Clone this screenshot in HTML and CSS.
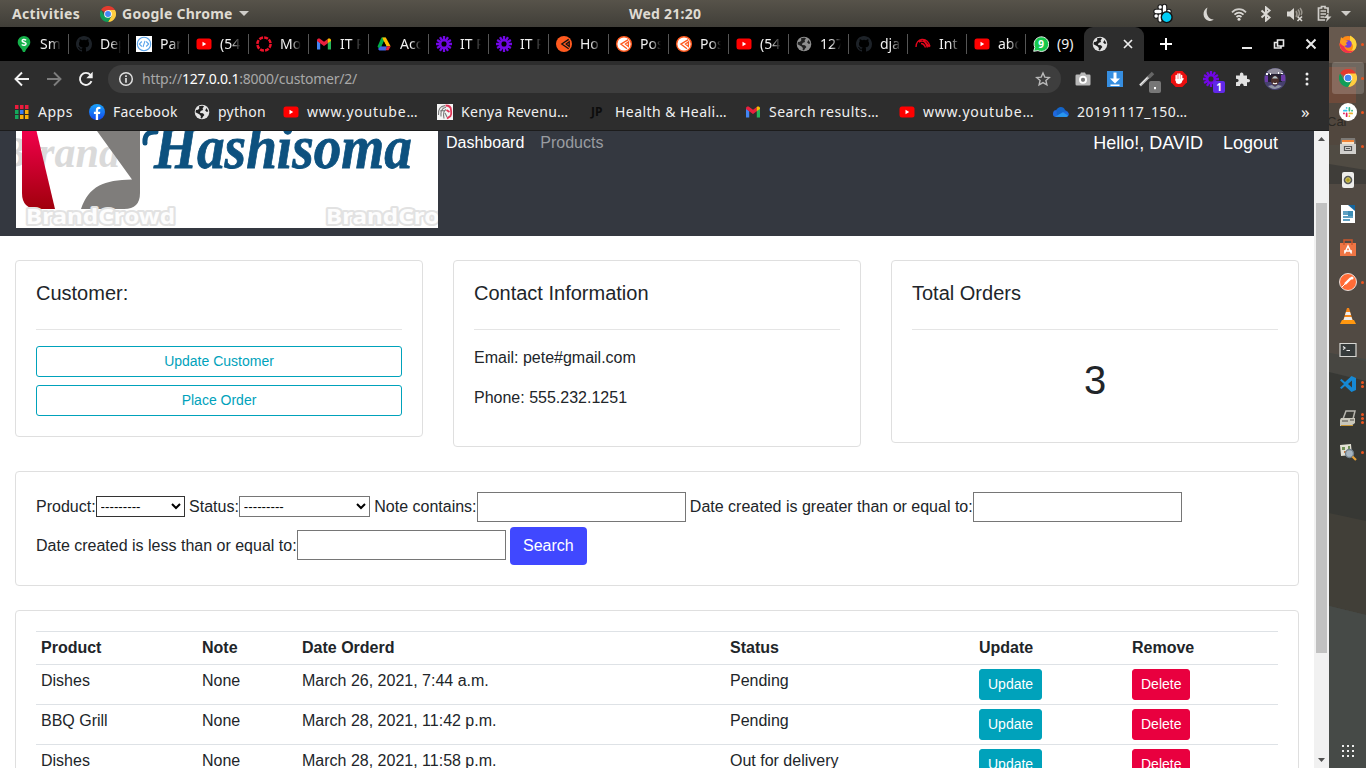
FILE: index.html
```html
<!DOCTYPE html>
<html lang="en">
<head>
<meta charset="utf-8">
<title>Customer</title>
<link rel="stylesheet" href="styles.css">
</head>
<body>
<svg class="defs" aria-hidden="true">
  <defs>
    <linearGradient id="fbg" x1="0" y1="0" x2="0" y2="1"><stop offset="0" stop-color="#19a4fb"/><stop offset="1" stop-color="#1348ee"/></linearGradient>
    <linearGradient id="redbar" x1="0" y1="0" x2="0" y2="1"><stop offset="0" stop-color="#f0004a"/><stop offset="1" stop-color="#a0000c"/></linearGradient>
    <symbol id="youtube" viewBox="0 0 16 16"><rect x=".5" y="2.5" width="15" height="11" rx="2.5" fill="#f00"/><path d="M6.5 5.8v4.4L10.2 8z" fill="#fff"/></symbol>
    <symbol id="github" viewBox="0 0 16 16"><path fill="#1d2228" d="M8 0C3.58 0 0 3.58 0 8c0 3.54 2.29 6.53 5.47 7.59.4.07.55-.17.55-.38v-1.49c-2.01.37-2.53-.49-2.69-.94-.09-.23-.48-.94-.82-1.13-.28-.15-.68-.52-.01-.53.63-.01 1.08.58 1.23.82.72 1.21 1.87.87 2.33.66.07-.52.28-.87.51-1.07-1.78-.2-3.64-.89-3.64-3.95 0-.87.31-1.59.82-2.15-.08-.2-.36-1.02.08-2.12 0 0 .67-.21 2.2.82a7.7 7.7 0 0 1 4 0c1.53-1.04 2.2-.82 2.2-.82.44 1.1.16 1.92.08 2.12.51.56.82 1.27.82 2.15 0 3.07-1.87 3.75-3.65 3.95.29.25.54.73.54 1.48v2.2c0 .21.15.46.55.38A8 8 0 0 0 16 8c0-4.42-3.58-8-8-8z"/></symbol>
    <symbol id="gmail" viewBox="0 0 16 16"><path fill="#4285f4" d="M1 4.5v9h3.200V7z"/><path fill="#24b55a" d="M15 4.500v9h-3.200V7z"/><path fill="#ea1f3d" d="M1 4.500C1 2.500 3 2 4.300 3L8 5.800 11.800 3v4.200L8 10 1 5z"/><path fill="#fbbc04" d="M11.700 3C13 2 15 2.500 15 4.500v.4l-3.300 2.400z"/></symbol>
    <symbol id="drive" viewBox="0 0 16 16"><path fill="#00ac47" d="M5.500 1.600h4L4 14l-2.500-3.500z"/><path fill="#ffba00" d="M6.200 1.600h3.600l4.800 8.600h-4.400z"/><path fill="#4164e8" d="M4.800 10.200h6.400L9.800 14.400H3.400L2 13z"/><path fill="#ea1f3d" d="M11 10.200h3.700l-2.200 4h-3z"/><path fill="#000" d="M8 5.800l2.500 4.400h-5z"/></symbol>
    <symbol id="burst" viewBox="0 0 16 16"><g stroke="#7106e6" stroke-width="2.300"><path d="M8 0v5.500M8 10.500v5.500M0 8h5.500M10.500 8h5.500M4 1.100l2.700 4.600M9.300 10.300l2.700 4.600M1.100 4l4.600 2.700M10.300 9.300l4.600 2.700M1.100 12l4.600-2.700M10.300 6.700l4.600-2.700M4 14.900l2.700-4.600M9.300 5.700L12 1.100"/></g></symbol>
    <symbol id="fish" viewBox="0 0 16 16"><circle cx="8" cy="8" r="8" fill="#ff5a1f"/><path fill="none" stroke="#111" stroke-width="1.300" d="M12.700 3.400L5.800 8l6.900 4.800M13.200 5.800L10.200 8l3 2.400z"/></symbol>
    <symbol id="fish2" viewBox="0 0 16 16"><circle cx="8" cy="8" r="7.300" fill="#fff" stroke="#ff5a1f" stroke-width="1.400"/><path fill="none" stroke="#ff5a1f" stroke-width="1.300" d="M12.300 3.600L4.800 8.100l6.200 4.600M12.600 5.800L9.400 8l3 2.400z"/></symbol>
    <symbol id="globe" viewBox="0 0 16 16"><circle cx="8" cy="8" r="7.300" fill="currentColor"/><path fill="#202020" d="M5 2.200c3-1 4.500-.5 5 .2L8.600 4.200 9 6 6.600 7 6 9l3 .2 1.400 1.700-1.500 1.800L8 14.400l-1.400-.3.300-2.100-1.600-1.800L1.500 8.200 2 6l2-.3 1.300-1.300zM12.500 4l1.800 3.200-1.400.8-1.800-1.400z"/></symbol>
    <symbol id="slack" viewBox="0 0 16 16"><g stroke-width="2.500" stroke-linecap="round"><path stroke="#36c5f0" d="M2 6h4M6 2v.2"/><path stroke="#2eb67d" d="M10 2v4M14 6h-.2"/><path stroke="#ecb22e" d="M10 10h4M10 14v-.2"/><path stroke="#e01e5a" d="M6 10v4M2 10h.2"/></g></symbol>
    <symbol id="chrome" viewBox="0 0 20 20"><path fill="#e33b2e" d="M10 10L1.300 5A10 10 0 0 1 18.700 5z"/><path fill="#ffcd40" d="M10 10V5h8.700A10 10 0 0 1 10 20l4.300-7.500z"/><path fill="#109d58" d="M10 10l4.300 2.500L10 20A10 10 0 0 1 1.300 5l4.400 7.500z"/><circle cx="10" cy="10" r="4.800" fill="#fff"/><circle cx="10" cy="10" r="3.700" fill="#4587f3"/></symbol>
  </defs>
</svg>

<header class="topbar">
  <span class="activities">Activities</span>
  <svg class="i16" viewBox="0 0 20 20"><use href="#chrome"/></svg>
  <span class="appname">Google Chrome</span>
  <svg class="caret" width="10" height="6" viewBox="0 0 10 6"><path d="M0 0h10L5 5z" fill="#cfcdc9"/></svg>
  <span class="clock">Wed 21:20</span>
  <div class="tray">
    <svg width="22" height="22" viewBox="0 0 22 22"><g stroke="#1b1b1b" stroke-width="5.500" stroke-linecap="round"><path d="M4 8.500h4M8.200 4v.2M12.500 3.500v5M17 8.500h-.3M4 13h.3M8.200 13v4"/></g><g stroke="#fff" stroke-width="3.300" stroke-linecap="round"><path d="M4 8.500h4M8.200 4v.2M12.500 3.500v5M17 8.500h-.3M4 13h.3M8.200 13v4"/></g><circle cx="14.700" cy="14.200" r="5.400" fill="#00cdf5" stroke="#111" stroke-width="1.400"/></svg>
    <svg class="moon" width="16" height="16" viewBox="0 0 16 16"><path fill="#dad8d4" d="M6.500 1.500C1 4 1.200 13 7.500 14.800c2 .5 4 0 5.300-1.200C7 13.500 4.200 7 6.500 1.500z"/></svg>
    <svg class="wifi" width="16" height="16" viewBox="0 0 16 16"><g fill="none" stroke="#cfcdc9" stroke-width="1.700"><path d="M1 6.300C5 2 11 2 15 6.300"/><path d="M3.500 8.700c2.800-2.700 6.200-2.700 9 0" stroke="#dedcd8"/><path d="M5.500 11c1.700-1.500 3.300-1.500 5 0" stroke="#dedcd8"/></g><circle cx="8" cy="13.300" r="1.500" fill="#dedcd8"/></svg>
    <svg class="bt" width="12" height="16" viewBox="0 0 12 16"><path fill="none" stroke="#dad8d4" stroke-width="2" d="M1.500 4.500l8 7L6 14.500V1.500L9.500 4.500l-8 7"/></svg>
    <svg class="vol" width="18" height="16" viewBox="0 0 18 16"><path fill="#dad8d4" d="M1 5.500h3L8 2v12L4 10.500H1z"/><path fill="none" stroke="#99958d" stroke-width="1.500" d="M10 5q2 3 0 6M12 3.500q3 4 0 7M14 2q3 4 1 7"/><path stroke="#dad8d4" stroke-width="1.600" d="M11.500 10.500l4.500 4.500M16 10.500L11.500 15"/></svg>
    <svg class="bat" width="15" height="17" viewBox="0 0 15 17"><path fill="none" stroke="#cfcdc9" stroke-width="1.700" d="M11 8V3H8V1.500H4.500V3H1.500v12H8"/><path stroke="#cfcdc9" stroke-width="1.500" d="M3.500 6h5.500M3.500 9h5.500M3.500 12h4"/><path fill="#cfcdc9" d="M11.500 8l-4.500 5h3l-1 4 5.500-5.500h-3z"/></svg>
    <svg width="10" height="6" viewBox="0 0 10 6"><path d="M0 0h10L5 5z" fill="#cfcdc9"/></svg>
  </div>
</header>

<div class="workspace">
<div class="browser">
  <div class="tabs">
    <div class="tab"><svg class="i16" viewBox="0 0 16 16"><path fill="#14b04a" d="M8 0a6.300 6.300 0 0 1 6.300 6.300C14.300 10 10.500 11.500 9 16H7C5.500 11.500 1.700 10 1.700 6.300A6.300 6.300 0 0 1 8 0z"/><path fill="none" stroke="#fff" stroke-width="1.400" d="M10.200 4.200C8.500 3 6 3.300 6.100 4.900c.1 1.700 4 1 4 2.900 0 1.700-2.700 1.900-4.400.7"/></svg><span>Sm</span></div>
    <div class="tab"><svg class="i16"><use href="#github"/></svg><span>Dep</span></div>
    <div class="tab"><svg class="i16" viewBox="0 0 16 16"><path fill="#fff" d="M0 0h16v16H0z"/><g fill="none" stroke="#5aa3ea" stroke-width="1.100"><circle cx="8" cy="8" r="6.700"/><path d="M5.800 5.500L3.300 8l2.500 2.500M10.200 5.500L12.700 8l-2.500 2.500M9 4.800L7 11.200"/></g></svg><span>Par</span></div>
    <div class="tab"><svg class="i16"><use href="#youtube"/></svg><span>(54</span></div>
    <div class="tab"><svg class="i16" viewBox="0 0 16 16"><circle cx="8" cy="8" r="6.600" fill="none" stroke="#ee1129" stroke-width="2.500" stroke-dasharray="4 1.180"/></svg><span>Mo</span></div>
    <div class="tab"><svg class="i16"><use href="#gmail"/></svg><span>IT P</span></div>
    <div class="tab"><svg class="i16"><use href="#drive"/></svg><span>Acc</span></div>
    <div class="tab"><svg class="i16"><use href="#burst"/></svg><span>IT P</span></div>
    <div class="tab"><svg class="i16"><use href="#burst"/></svg><span>IT P</span></div>
    <div class="tab"><svg class="i16"><use href="#fish"/></svg><span>Ho</span></div>
    <div class="tab"><svg class="i16"><use href="#fish2"/></svg><span>Pos</span></div>
    <div class="tab"><svg class="i16"><use href="#fish2"/></svg><span>Pos</span></div>
    <div class="tab"><svg class="i16"><use href="#youtube"/></svg><span>(54</span></div>
    <div class="tab"><svg class="i16 dim"><use href="#globe"/></svg><span>127</span></div>
    <div class="tab narrow"><svg class="i16"><use href="#github"/></svg><span>dja</span></div>
    <div class="tab narrow"><svg class="i16" viewBox="0 0 16 16"><g fill="none" stroke="#e5071c" stroke-width="1.400"><path d="M1 11C1 2 12 0 15 10.500M4 6c5-2.500 7 .5 8.500 5.500M6 7.500c2.500 0 3.500 1.500 4.500 4M8.500 4l6 7"/></g></svg><span>Int</span></div>
    <div class="tab narrow"><svg class="i16"><use href="#youtube"/></svg><span>abo</span></div>
    <div class="tab last"><svg class="i16" viewBox="0 0 16 16"><path fill="#16c74c" stroke="#fff" stroke-width=".9" d="M.7 15.300l1.100-4A7.300 7.300 0 1 1 5 14.600z"/><text x="8.200" y="11.700" text-anchor="middle" class="badge9">9</text></svg><span>(9)</span></div>
    <div class="tab active"><svg class="i16 light"><use href="#globe"/></svg><svg width="10" height="10" viewBox="0 0 10 10"><path stroke="#eee" stroke-width="1.700" d="M1 1l8 8M9 1L1 9"/></svg></div>
    <svg class="plus" width="12" height="12" viewBox="0 0 12 12"><path stroke="#fff" stroke-width="2" d="M6 0v12M0 6h12"/></svg>
    <div class="winctl">
      <svg width="12" height="12" viewBox="0 0 12 12"><path stroke="#e8e8e8" stroke-width="2" d="M1 10h10"/></svg>
      <svg width="12" height="12" viewBox="0 0 12 12"><path fill="none" stroke="#e8e8e8" stroke-width="1.600" d="M4.500 2h6v6h-6zM4 4.500H1.500V10H8V8.500"/></svg>
      <svg width="12" height="12" viewBox="0 0 12 12"><path stroke="#e8e8e8" stroke-width="2" d="M1.500 1.500l9 9M10.500 1.500l-9 9"/></svg>
    </div>
  </div>

  <div class="toolbar">
    <div class="navbtns">
      <svg width="16" height="16" viewBox="0 0 16 16"><path fill="none" stroke="#f1f1f1" stroke-width="1.900" d="M15 8H2M8 1.500L1.500 8 8 14.500"/></svg>
      <svg width="16" height="16" viewBox="0 0 16 16"><path fill="none" stroke="#7d7d7d" stroke-width="1.900" d="M1 8h13M8 1.500L14.500 8 8 14.500"/></svg>
      <svg width="16" height="16" viewBox="0 0 16 16"><path fill="none" stroke="#f1f1f1" stroke-width="1.900" d="M13.500 10.200A6 6 0 1 1 12.500 4"/><path fill="#f1f1f1" d="M14.700.8v6.400H8.300z"/></svg>
    </div>
    <div class="omnibox">
      <svg width="16" height="16" viewBox="0 0 16 16"><circle cx="8" cy="8" r="6.300" fill="none" stroke="#e0e0e0" stroke-width="1.500"/><path stroke="#e0e0e0" stroke-width="1.700" d="M8 7v4.700M8 4.200v1.700"/></svg>
      <span class="url">http://<b>127.0.0.1</b>:8000/customer/2/</span>
      <svg class="star" width="16" height="16" viewBox="0 0 16 16"><path fill="none" stroke="#b9b9b9" stroke-width="1.400" d="M8 2l1.800 4.100 4.500.4-3.400 3 1 4.400L8 11.600l-3.900 2.300 1-4.400-3.400-3 4.500-.4z"/></svg>
    </div>
    <div class="exts">
      <svg class="i16" viewBox="0 0 16 16"><path fill="#b9b9b9" d="M1.800 3.500H5l1-2h4l1 2h3.200q1.300 0 1.300 1.300v8.400q0 1.300-1.300 1.300H1.800Q.5 14.500.5 13.200V4.800q0-1.300 1.300-1.300z"/><circle cx="8" cy="8.700" r="3" fill="none" stroke="#fff" stroke-width="2"/><circle cx="8" cy="8.700" r="2" fill="#777"/></svg>
      <svg class="i16" viewBox="0 0 16 16"><path fill="#368ee0" d="M0 0h16v16H0z"/><path fill="#fff" d="M6.500 1.500h3v6H13l-5 5-5-5h3.500zM3.500 13.500h9V15h-9z"/></svg>
      <div class="ext"><svg class="i16" viewBox="0 0 16 16"><path stroke="#bbb" stroke-width="2.600" d="M1 14.500L9.500 6"/><path stroke="#666" stroke-width="3.500" d="M9.500 6.500L14 2"/><path stroke="#eee" d="M1 14L8 7"/></svg><i class="chip grey"></i></div>
      <svg class="i16" viewBox="0 0 16 16"><path fill="#eb0f0f" d="M4.700 0h6.600L16 4.700v6.600L11.300 16H4.700L0 11.300V4.700z"/><path fill="none" stroke="#fff" stroke-width="1.500" stroke-linecap="round" d="M5.200 4.500v5M7 3v5M8.800 3v5M10.600 4.500v5l1.400-1.700"/><path fill="#fff" d="M4.500 8h6.700v2c0 3-5 4-6.200 1.500z"/></svg>
      <div class="ext"><svg class="i16"><use href="#burst"/></svg><i class="chip violet">1</i></div>
      <svg class="i16" viewBox="0 0 16 16"><path fill="#e2e2e2" d="M1 4.500h4C4 .5 9 .5 8.500 4.500H12V8c4-.8 4 4 0 3.300V15H8.700c.2-3.500-4-3.500-3.700 0H1v-3.800c3.500 0 3.500-3.500 0-3.500z"/></svg>
      <svg class="avatar" width="22" height="22" viewBox="0 0 22 22"><circle cx="11" cy="11" r="11" fill="#46406e"/><path fill="#8f8c9c" d="M3 3.500C8-1 15-1 19 3.500l-2 2.500H5z"/><path fill="#232033" d="M4 6h14v8H4z"/><path fill="#6d3ba8" d="M1 8h3v6H1zM17 7h4v6h-4z"/><path fill="#fff" d="M2 5h2v2H2zM6 5h1v2H6zM14 4h1v2h-1zM17 5h2v1h-2z"/><ellipse cx="11" cy="12.500" rx="4" ry="5" fill="#4b302d"/><path fill="#b3c5ca" d="M8 10.500q3-5 6 0z"/><path stroke="#fff" stroke-width="1.200" d="M9 15q2 1.500 4 0"/><path fill="#8f93a3" d="M4 18l4-1 3 2 3-2 4 1q-7 6-14 0z"/></svg>
      <svg width="16" height="16" viewBox="0 0 16 16" fill="#eee"><circle cx="8" cy="3" r="1.500"/><circle cx="8" cy="8" r="1.500"/><circle cx="8" cy="13" r="1.500"/></svg>
    </div>
  </div>

  <div class="bookmarks">
    <div class="bm"><svg class="apps" width="14" height="14" viewBox="0 0 14 14"><path fill="#ea1c3d" d="M0 0h3.500v4H0zM5 0h3.500v4H5zM10 0h3.500v4H10z"/><path fill="#14a85c" d="M0 5h3.500v4H0zM0 10h3.500v4H0z"/><path fill="#3a7df0" d="M5 5h3.500v4H5z"/><path fill="#f9b20a" d="M10 5h3.500v4H10zM5 10h3.500v4H5zM10 10h3.500v4H10z"/></svg><span class="w-apps">Apps</span></div>
    <div class="bm"><svg class="i16" viewBox="0 0 16 16"><circle cx="8" cy="8" r="8" fill="url(#fbg)"/><path fill="#fff" d="M6.800 15.900V10H4.900V7.700h1.900V6.200c0-2.200 1.200-3.400 3.100-3.400l1.500.1v2h-1c-1 0-1.300.6-1.300 1.300v1.500h2.200L11 10H9.100v5.900z"/></svg><span class="w-fb">Facebook</span></div>
    <div class="bm"><svg class="i16 light"><use href="#globe"/></svg><span class="w-py">python</span></div>
    <div class="bm"><svg class="i16"><use href="#youtube"/></svg><span class="w-yt">www.youtube…</span></div>
    <div class="bm"><svg class="i16" viewBox="0 0 16 16"><path fill="#f4f4f4" d="M0 0h16v16H0z"/><path fill="none" stroke="#777" stroke-width="1.100" d="M8 1.500C3 2 1 6 1.500 11M8 3.500C5 4.500 3.500 8 4 12.500M9 5.500C6 7 6 10 7 14.500M5 2.500l4 1M3 7l5-.5M8 9l2 4"/><path fill="none" stroke="#df3657" stroke-width="1.800" d="M8.500 1.500c3 0 5.500 1.500 5.500 4.500 0 2 1 4-.5 6L10 14.500M9.500 6l3 2"/></svg><span class="w-ke">Kenya Revenu…</span></div>
    <div class="bm"><i class="jp">JP</i><span class="w-he">Health &amp; Heali…</span></div>
    <div class="bm"><svg class="i16"><use href="#gmail"/></svg><span class="w-se">Search results…</span></div>
    <div class="bm"><svg class="i16"><use href="#youtube"/></svg><span class="w-yt">www.youtube…</span></div>
    <div class="bm"><svg class="i16" viewBox="0 0 16 16"><path fill="#1464c8" d="M3 6.500C5 1.500 11 2 12 6l3 2-4 5H3z"/><path fill="#2068dd" d="M3.500 6C0 6 0 9 0 10.500 0 12 1 13 3 13h10c3.500 0 4-5 0-5.500-3 0-5 1-9 5z"/><path fill="#2897ee" d="M2 12.800l8-4.600 5 3.300q-.7 1.500-2.200 1.500z"/></svg><span class="w-20">20191117_150…</span></div>
    <span class="more">»</span>
  </div>

  <div class="viewport">
    <main class="page">
      <nav class="navbar">
        <svg class="logo" width="422" height="97" viewBox="0 0 422 97">
          <path fill="#fff" d="M0 0h422v97H0z"/>
          <text x="-19" y="36" class="ghost">B</text><text x="22" y="36" class="ghost" textLength="82" lengthAdjust="spacingAndGlyphs">rand</text>
          <path fill="url(#redbar)" d="M6 0h14.500L39 78H22Q6 78 6 62z"/>
          <path fill="#7f7d7b" d="M81 0h43v62q0 16-16 16H65C73 55 88 49 116 48.500z"/>
          <text x="10" y="93" class="mark" textLength="149" lengthAdjust="spacingAndGlyphs">BrandCrowd</text>
          <text x="310" y="93" class="mark" textLength="149" lengthAdjust="spacingAndGlyphs">BrandCrowd</text>
          <path fill="none" stroke="#0d517f" stroke-width="5" stroke-linecap="round" d="M140 1q-12-1-11 11"/>
          <text x="138" y="37" class="brand" textLength="258" lengthAdjust="spacingAndGlyphs">Hashisoma</text>
        </svg>
        <a class="link on">Dashboard</a><a class="link">Products</a>
        <span class="hello">Hello!, DAVID</span><a class="logout">Logout</a>
      </nav>

      <section class="cards">
        <div class="card"><h5>Customer:</h5><hr><a class="btn outline">Update Customer</a><a class="btn outline">Place Order</a></div>
        <div class="card"><h5>Contact Information</h5><hr><p>Email: pete#gmail.com</p><p>Phone: 555.232.1251</p></div>
        <div class="card"><h5>Total Orders</h5><hr><h1>3</h1></div>
      </section>

      <form class="card filter">
        <div class="frow">
          <label>Product:</label><select class="s1"><option>---------</option></select>
          <label>Status:</label><select class="s2"><option>---------</option></select>
          <label>Note contains:</label><input type="text">
          <label>Date created is greater than or equal to:</label><input type="text">
        </div>
        <div class="frow second">
          <label>Date created is less than or equal to:</label><input type="text">
          <button type="button" class="search">Search</button>
        </div>
      </form>

      <div class="card orders">
        <table>
          <colgroup><col class="c1"><col class="c2"><col class="c3"><col class="c4"><col class="c5"><col class="c6"></colgroup>
          <tr><th>Product</th><th>Note</th><th>Date Orderd</th><th>Status</th><th>Update</th><th>Remove</th></tr>
          <tr><td>Dishes</td><td>None</td><td>March 26, 2021, 7:44 a.m.</td><td>Pending</td><td><a class="btn info">Update</a></td><td><a class="btn danger">Delete</a></td></tr>
          <tr><td>BBQ Grill</td><td>None</td><td>March 28, 2021, 11:42 p.m.</td><td>Pending</td><td><a class="btn info">Update</a></td><td><a class="btn danger">Delete</a></td></tr>
          <tr><td>Dishes</td><td>None</td><td>March 28, 2021, 11:58 p.m.</td><td>Out for delivery</td><td><a class="btn info">Update</a></td><td><a class="btn danger">Delete</a></td></tr>
        </table>
      </div>
    </main>
    <div class="scrollbar">
      <svg width="15" height="16" viewBox="0 0 15 16"><path fill="#505050" d="M4 10h7L7.500 6z"/></svg>
      <div class="thumb"></div>
      <svg class="down" width="15" height="16" viewBox="0 0 15 16"><path fill="#505050" d="M4 6h7l-3.500 4z"/></svg>
    </div>
  </div>
</div>

<aside class="dock">
  <svg class="wall" width="37" height="741" viewBox="0 0 37 741"><path fill="#51473e" d="M0 0h37v118H0z"/><path fill="#67594e" d="M0 0h37v36H0z"/><path fill="#754b39" d="M0 40h27v36H0z" opacity=".8"/><path fill="#504b43" d="M0 118h37v35H0z"/><path fill="#3f3d39" d="M0 137l37 6v16H0z"/><path fill="#514a43" d="M0 157h37v175L0 326z"/><path fill="#474641" d="M0 326l37 8v20L0 345z"/><path fill="#373834" d="M0 345l37 9v140H0z"/><path fill="#413f38" d="M0 486l37 8v94l-37-9z"/><path fill="#464a47" d="M0 579l37 9v153H0z"/><text x="-2" y="99" class="walltext">Cal</text></svg>
  <div class="app"><svg viewBox="0 0 18 18"><circle cx="9" cy="9.500" r="8.500" fill="#ff8a16"/><path fill="#ffd43a" d="M11 .5c3 2 6.500 4 6.500 9.500 0 4-4 8-8.500 8 4-2 5-4 5-7 0-2-2-3-3-4z"/><path fill="#f3324c" d="M.5 8c0 6 4 10 8.500 10 3 0 5-1 6-3-4 2-9 1-10-4z"/><circle cx="9" cy="9" r="3.700" fill="#7440d8"/><path fill="#ff9d20" d="M1 7l1-5 3 3 4 1-2 2 1 2-3 1-2-1z"/></svg><i></i></div>
  <div class="app cur"><svg viewBox="0 0 20 20"><use href="#chrome"/></svg><i></i></div>
  <div class="app"><svg viewBox="0 0 18 18"><circle cx="9" cy="9" r="9" fill="#fff"/><use href="#slack" x="3.500" y="3.500" width="11" height="11"/></svg><i></i></div>
  <div class="app"><svg viewBox="0 0 18 18"><path fill="#7d7a76" d="M2 1h14l1 7H1z"/><path fill="#f08337" d="M3 3h12v4H3z"/><path fill="#f7e4cb" d="M3 5h12v2H3z"/><path fill="#d1d0cd" d="M1 7h16v10H1z"/><path fill="none" stroke="#555" stroke-width="1.200" d="M5.500 9.500h7v4h-7zM7 11.500h4"/></svg><i></i></div>
  <div class="app"><svg viewBox="0 0 18 18"><rect x="3" y="1" width="12" height="16" rx="2" fill="#ededeb"/><circle cx="9" cy="9" r="4.300" fill="#56585a"/><circle cx="9" cy="9" r="2.300" fill="#ac9b23" stroke="#d8cc67"/></svg></div>
  <div class="app"><svg viewBox="0 0 18 18"><path fill="#fff" d="M2 0h9l5 5v13H2z"/><path fill="#16669e" d="M9 0h7v6z"/><path stroke="#2c83ae" stroke-width="1.500" d="M4 7h5M4 9h5M4 12h10M4 15h7"/><path fill="#3b8cb5" d="M9 6h5v5H9z"/></svg></div>
  <div class="app"><svg viewBox="0 0 18 18"><path fill="#ee7544" d="M1 4h16v13H1z"/><path fill="none" stroke="#cc572d" stroke-width="1.500" d="M5 6V1h8v5"/><path fill="none" stroke="#fff" stroke-width="1.500" d="M5.500 14.500L9 7l3.500 7.500M5 12h8"/></svg></div>
  <div class="app"><svg viewBox="0 0 18 18"><circle cx="9" cy="9" r="8.500" fill="#ff6c37" stroke="#fff" stroke-width=".8"/><path stroke="#fff" stroke-width="2.400" d="M6 11l6-6"/><path stroke="#fff" d="M3 14l4-4"/><circle cx="13" cy="5" r="1.600" fill="#fff"/></svg><i></i></div>
  <div class="app"><svg viewBox="0 0 18 18"><path fill="#f58518" d="M8 1h2l4 13H4z"/><path fill="#eee" d="M7 5h4l1 3H6zM5.500 10h7l1 3h-9z"/><path fill="#ff970f" d="M3 13h12l2 4H1z"/></svg></div>
  <div class="app"><svg viewBox="0 0 18 18"><path fill="#363b3b" stroke="#d7d7d3" stroke-width="1.200" d="M1 2.500h16v13H1z"/><path fill="none" stroke="#eee" stroke-width="1.200" d="M4 5.500L6 7 4 8.500M7.500 9.500H11"/></svg></div>
  <div class="app"><svg viewBox="0 0 18 18"><path fill="#1689d4" d="M12.500 1L17 3v12l-4.500 2L6 11l-3.500 3L1 12.800 5 9 1 5.200 2.500 4 6 7zM13 5.500L9 9l4 3.500z" fill-rule="evenodd"/></svg><i class="two"></i></div>
  <div class="app"><svg viewBox="0 0 18 18"><path fill="#393a35" stroke="#b6b5ae" stroke-width="1.500" d="M7 2h9l-2 8H4z"/><path fill="#c9c7bb" d="M2 9h14v5l-4 3H1v-6z"/><path stroke="#77766f" stroke-width="1.500" d="M3 12h6M11 11h4"/><path stroke="#c89533" d="M2 16.500h12"/></svg><i class="three"></i></div>
  <div class="app"><svg viewBox="0 0 18 18"><path fill="#e2e0d4" d="M1 2l11-1 1 11-11 1z"/><path fill="#6f9256" d="M3 4h3v3H3zM9 3h2v3H9z"/><path fill="#c6763e" d="M5 8h3v2H5z"/><circle cx="10.500" cy="10.500" r="4" fill="#a7b6c2" stroke="#717f8a" stroke-width="1.300"/><path stroke="#e6a138" stroke-width="2.200" d="M13.500 13.500L17 17"/></svg><i></i></div>
  <svg class="grid" width="12" height="12" viewBox="0 0 12 12" fill="#eee"><path d="M0 0h2v2H0zM5 0h2v2H5zM10 0h2v2h-2zM0 5h2v2H0zM5 5h2v2H5zM10 5h2v2h-2zM0 10h2v2H0zM5 10h2v2H5zM10 10h2v2h-2z"/></svg>
</aside>
</div>
</body>
</html>
```

FILE: styles.css
```css
* { box-sizing: border-box; }
html, body { margin: 0; height: 768px; overflow: hidden; }
body { font-family: "Liberation Sans", Arial, sans-serif; font-size: 16px; line-height: 24px; color: #212529; }
svg { display: block; flex: none; }
.defs { position: absolute; width: 0; height: 0; }
.i16 { width: 16px; height: 16px; }
.dim { color: #8f8f8f; }
.light { color: #e4e4e4; }

/* desktop bar */
.topbar { position: relative; height: 27px; display: flex; align-items: center; padding-left: 12px; background: linear-gradient(#57534a, #403e38); color: #dfdbd2; font: bold 14px/27px "Noto Sans", sans-serif; }
.activities { width: 88px; letter-spacing: .3px; }
.appname { width: 117px; margin-left: 6px; letter-spacing: .25px; white-space: nowrap; }
.clock { position: absolute; left: 629px; letter-spacing: .25px; }
.tray { margin-left: auto; display: flex; align-items: center; padding-right: 15px; }
.moon { margin-left: 27px; }
.wifi { margin-left: 14px; }
.bt { margin-left: 13px; }
.vol { margin-left: 14px; }
.bat { margin-left: 13px; margin-right: 9px; }

.workspace { display: flex; height: 741px; }
.browser { width: 1329px; display: flex; flex-direction: column; background: #2d2d2d; color: #f0f0f0; font-family: "Noto Sans", sans-serif; }

/* tab strip */
.tabs { height: 34px; display: flex; align-items: center; background: #000; padding-left: 9px; font-size: 14px; line-height: 20px; }
.tab { width: 60px; height: 20px; padding-left: 7px; display: flex; align-items: center; border-right: 1px solid #555; flex: none; }
.tab span { margin-left: 8px; width: 21px; overflow: hidden; white-space: nowrap; -webkit-mask-image: linear-gradient(90deg, #000 50%, transparent); mask-image: linear-gradient(90deg, #000 50%, transparent); }
.tab.narrow { width: 59px; }
.tab.last { width: 58px; border: 0; }
.tab.last span { -webkit-mask-image: none; mask-image: none; }
.tab.active { width: 60px; height: 34px; border: 0; border-radius: 9px 9px 0 0; background: #2d2d2d; padding-left: 8px; gap: 15px; }
.badge9 { font: bold 10px "Noto Sans", sans-serif; fill: #fff; }
.plus { margin-left: 16px; }
.winctl { margin-left: auto; display: flex; gap: 20px; padding-right: 12px; }

/* toolbar */
.toolbar { height: 36px; display: flex; align-items: center; padding-left: 14px; }
.navbtns { display: flex; gap: 16px; width: 94px; }
.omnibox { width: 953px; height: 28px; border-radius: 14px; background: #3e3e3e; display: flex; align-items: center; padding: 0 10px; }
.url { margin-left: 8px; font-size: 14px; color: #a8a8a8; letter-spacing: -.23px; }
.url b { font-weight: normal; color: #fff; }
.star { margin-left: auto; }
.exts { display: flex; align-items: center; gap: 16px; margin-left: 14px; }
.exts > * { flex: none; }
.avatar { margin: 0 -3px; }
.ext { position: relative; width: 16px; height: 16px; }
.chip { position: absolute; left: 10px; top: 10px; width: 12px; height: 12px; border-radius: 2px; font: bold 10px/12px "Noto Sans", sans-serif; text-align: center; color: #fff; }
.chip.grey { background: radial-gradient(circle at 50% 60%, #fff 1px, #777 1.5px); }
.chip.violet { background: #6128e8; }

/* bookmarks */
.bookmarks { height: 34px; display: grid; grid-template-columns: 75px 105px 89px 154px 154px 154px 154px 154px 248px auto; padding: 0 0 4px 14px; align-items: center; font-size: 14px; line-height: 20px; border-bottom: 1px solid #1c1c1c; }
.bm { display: flex; align-items: center; gap: 8px; white-space: nowrap; }
.apps { margin: 0 1px; }
.w-apps { letter-spacing: .5px; }
.w-fb, .w-py { letter-spacing: .25px; }
.w-yt { letter-spacing: .8px; }
.w-ke { letter-spacing: .3px; }
.w-he, .w-se { letter-spacing: .45px; }
.w-20 { letter-spacing: .4px; }
.jp { width: 16px; color: #0c0c0c; font: bold 12px "Noto Sans", sans-serif; }
.more { line-height: 16px; font-size: 17px; }

/* page */
.viewport { flex: 1; display: flex; min-height: 0; font-family: "Liberation Sans", Arial, sans-serif; color: #212529; }
.page { width: 1314px; background: #fff; overflow: hidden; }
.navbar { height: 105px; background: #343840; display: flex; align-items: flex-start; padding-left: 16px; color: #fff; }
.link { margin: 0 8px; line-height: 23px; color: #999ca0; }
.link.on { color: #fff; }
.hello { margin-left: auto; font-size: 18px; line-height: 24px; }
.logout { font-size: 18px; margin: 0 36px 0 20px; line-height: 24px; }
.brand { font: italic bold 62px "Liberation Serif", serif; fill: #0d517f; stroke: #0d517f; stroke-width: .8px; }
.ghost { font: italic bold 45px "Liberation Serif", serif; fill: #dadada; }
.mark { font: bold 22px "Noto Sans", sans-serif; fill: #fdfdfd; stroke: #e2e2e2; stroke-width: 4px; stroke-linejoin: round; paint-order: stroke; }

.cards { display: grid; grid-template-columns: repeat(3, 408px); gap: 30px; padding: 24px 15px 0; align-items: start; height: 211px; margin-bottom: 24px; }
.card { border: 1px solid #dfdfdf; border-radius: 4px; padding: 20px; background: #fff; }
.card h5 { margin: 0 0 24px; font-size: 20px; line-height: 24px; font-weight: 500; }
.card hr { margin: 0 0 16px; border: 0; border-top: 1px solid #e5e5e5; }
.card p { margin: 0 0 16px; }
.card h1 { margin: 0; padding: 10px 0 18px; font-size: 40px; line-height: 48px; font-weight: 500; text-align: center; }
.btn { display: block; height: 31px; border: 1px solid; border-radius: 3px; font-size: 14px; line-height: 21px; padding: 4px 8px; text-align: center; }
.btn + .btn { margin-top: 8px; }
.outline { color: #00a2bb; border-color: #00a2bb; }
.info, .danger { display: inline-block; color: #fff; vertical-align: top; }
.info { background: #00a2bb; border-color: #00a2bb; }
.danger { background: #e9003f; border-color: #e9003f; }

.filter { height: 115px; margin: 0 15px 24px; white-space: nowrap; }
.frow { display: flex; align-items: center; height: 30px; }
.frow.second { height: 38px; margin-top: 5px; }
.frow.second input { margin-top: -2px; }
.filter select { height: 21px; border: 1px solid #767676; background-color: #fff; font: 13.333px "Liberation Sans", Arial, sans-serif; border-radius: 0; padding: 0; margin: -1px 4.45px 0 0; color: #000; }
.filter .s1 { width: 89px; border-color: #333; }
.filter .s2 { width: 131px; }
.filter input { width: 209px; height: 30px; border: 1px solid #767676; margin: 0 4.3px 0 0; padding: 1px 2px; border-radius: 0; }
.search { width: 77px; height: 38px; border: 0; border-radius: 4px; background: #4048ff; color: #fff; font: 16px "Liberation Sans", Arial, sans-serif; padding: 0; }

.orders { margin: 0 15px; height: 300px; }
table { width: 1242px; table-layout: fixed; border-collapse: separate; border-spacing: 0; }
.c1 { width: 161px; } .c2 { width: 100px; } .c3 { width: 428px; } .c4 { width: 249px; } .c5 { width: 153px; } .c6 { width: 151px; }
th, td { border-top: 1px solid #dee2e6; text-align: left; vertical-align: top; padding: 4px 5px; height: 40px; }
th { height: 33px; }

.scrollbar { width: 15px; background: #f1f1f1; display: flex; flex-direction: column; }
.thumb { width: 11px; height: 450px; margin: 56px 0 0 2px; background: #c1c1c1; }
.down { margin-top: auto; }

/* dock */
.dock { position: relative; width: 37px; background: #464a47; display: flex; flex-direction: column; }
.wall { position: absolute; inset: 0; }
.walltext { font: 13px "Liberation Sans", sans-serif; fill: #2b2723; }
.app { position: relative; height: 34px; display: flex; align-items: center; padding-left: 10px; }
.app svg { width: 18px; height: 18px; }
.cur::before { content: ""; position: absolute; left: 3px; top: 1px; width: 32px; height: 32px; border-radius: 3px; background: rgba(255,255,255,.18); }
.cur svg { position: relative; }
.app i { position: absolute; left: 32px; top: 16px; width: 3px; height: 3px; border-radius: 50%; background: #e95420; }
.app .two { top: 14px; box-shadow: 0 4px #e95420; }
.app .three { top: 12px; box-shadow: 0 4px #e95420, 0 8px #e95420; }
.grid { position: relative; margin: auto 0 11px 13px; }
```
